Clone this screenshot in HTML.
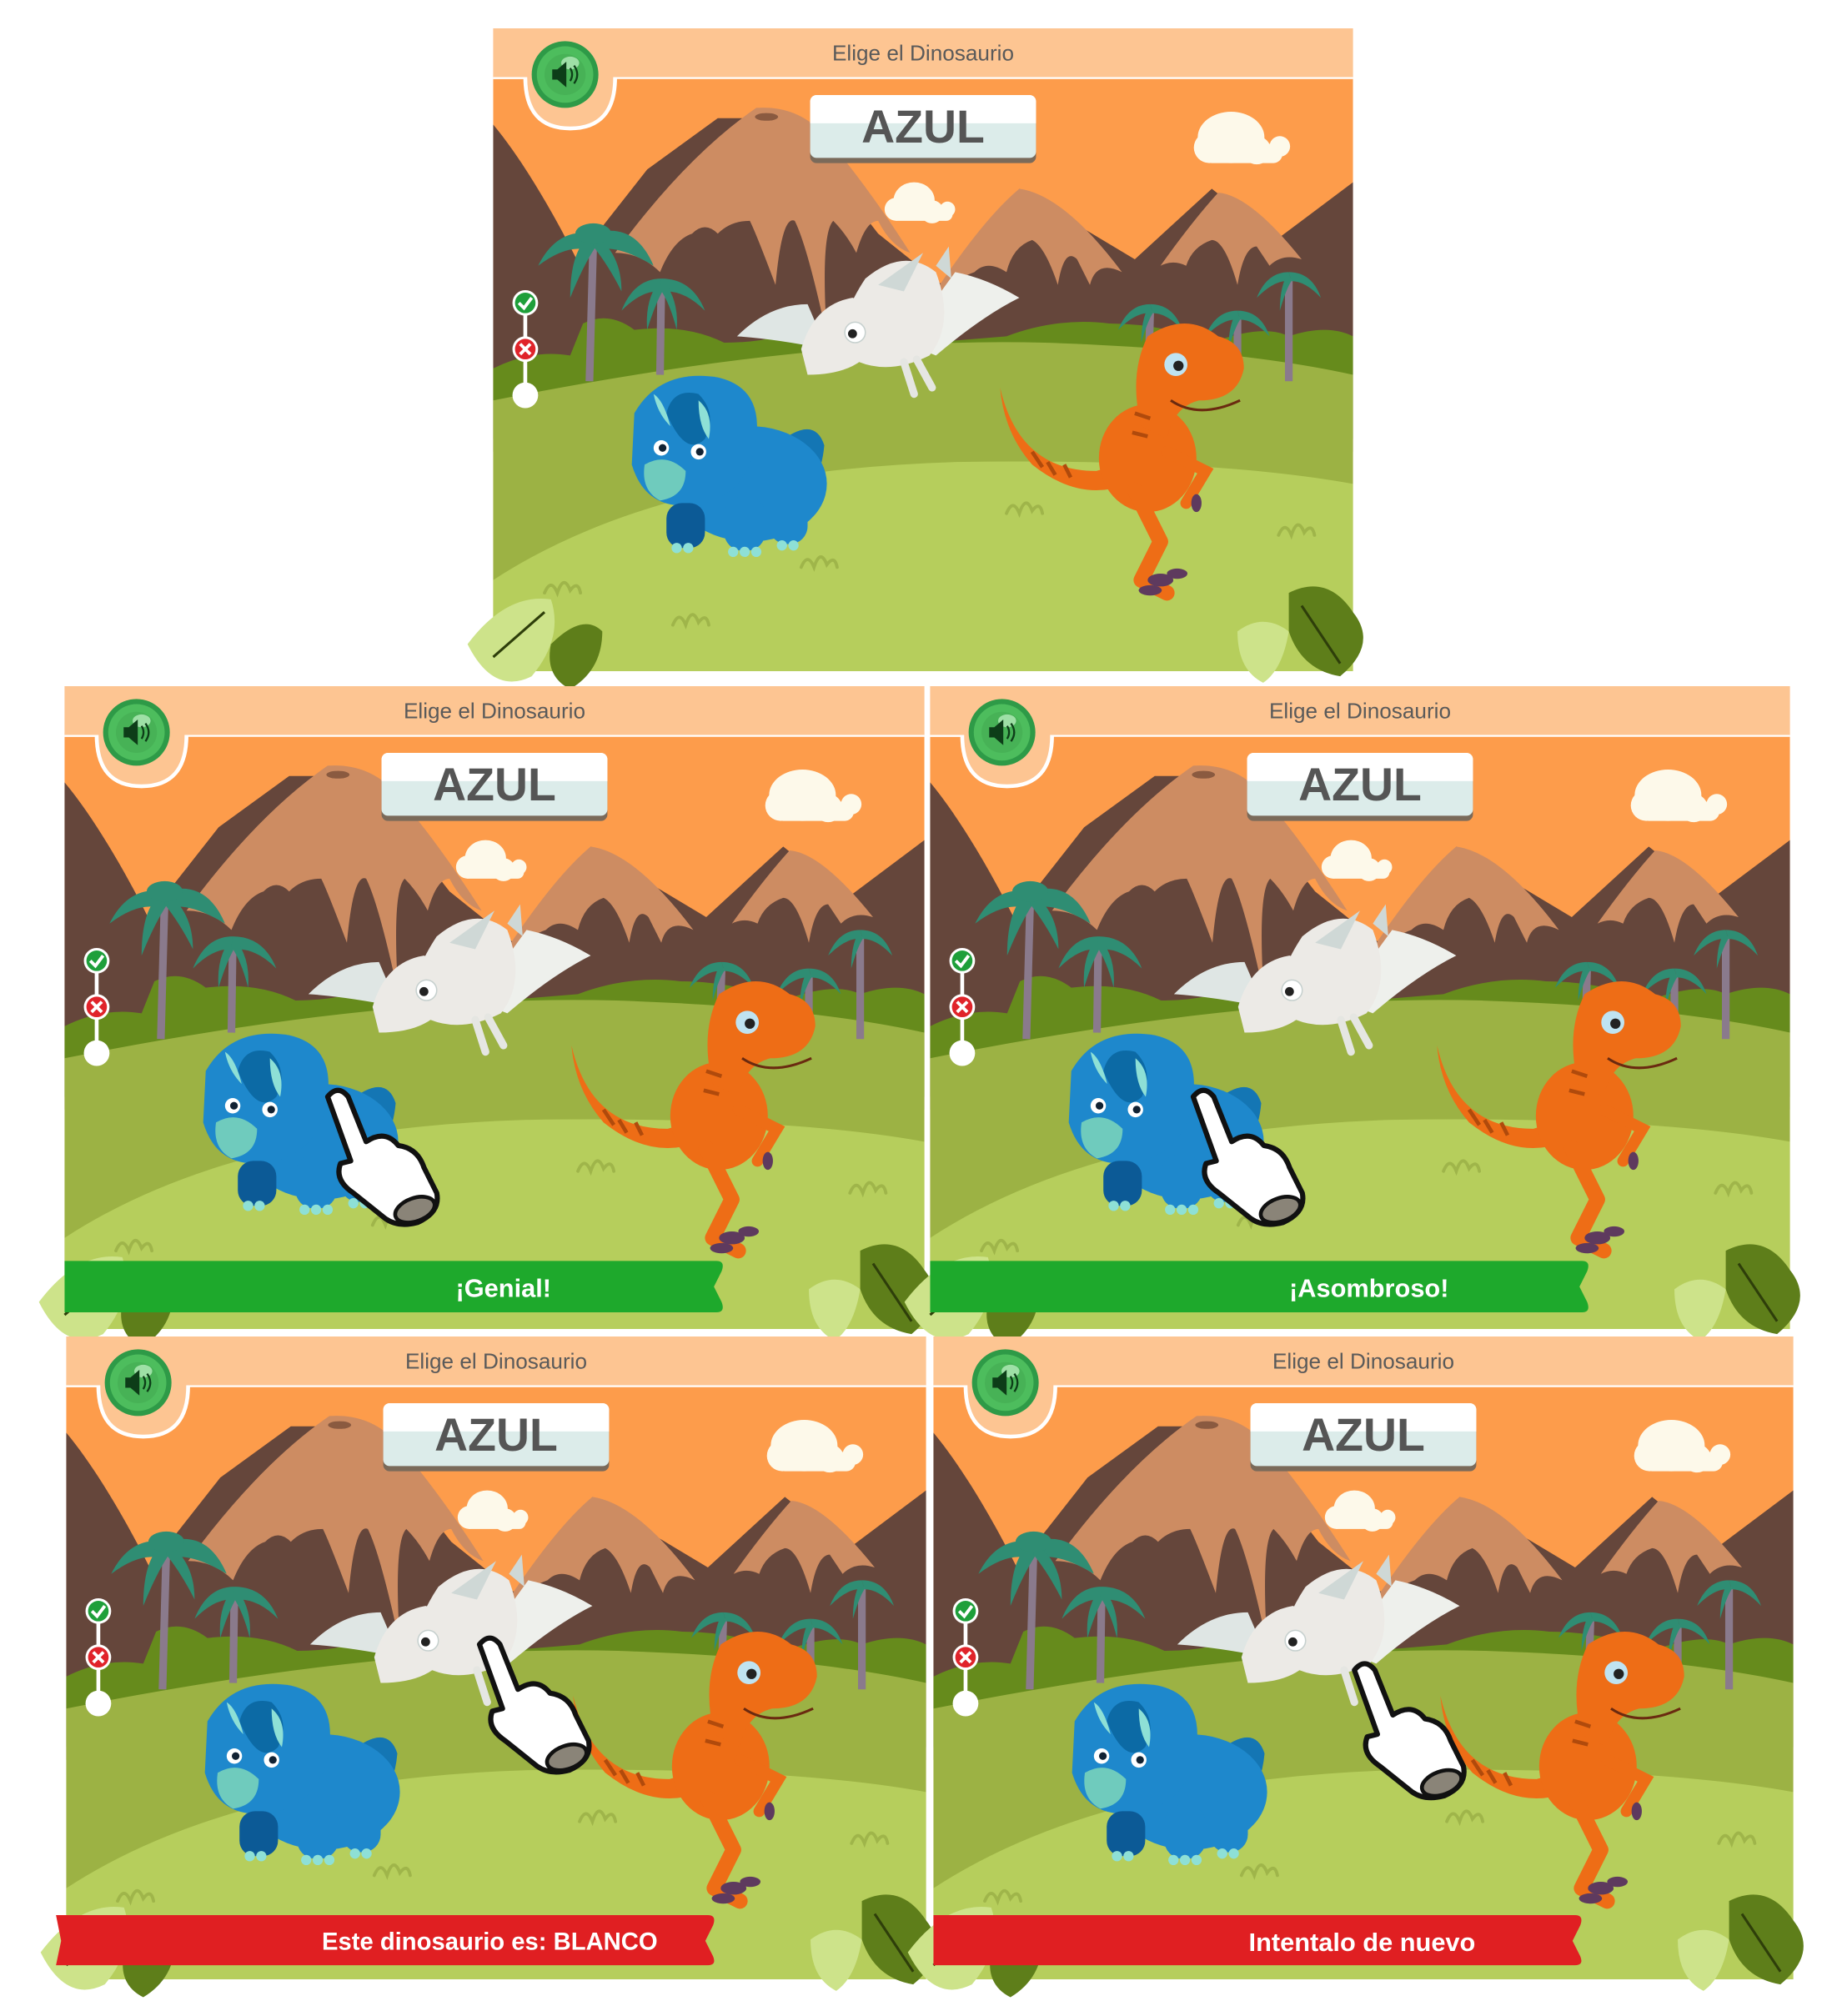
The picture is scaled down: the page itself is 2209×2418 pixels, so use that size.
<!DOCTYPE html>
<html><head><meta charset="utf-8">
<style>
html,body{margin:0;padding:0;background:#fff;width:2209px;height:2418px;overflow:hidden;position:relative;font-family:"Liberation Sans",sans-serif}
.p{position:absolute;width:1032px;height:771px}
.p svg{position:absolute;left:0;top:0;width:1032px;height:771px;overflow:visible}
</style></head><body>
<svg width="0" height="0" style="position:absolute">
<defs>
<symbol id="scene" viewBox="0 0 670 501" overflow="visible">
<rect x="0" y="0" width="670" height="501" fill="#fd9c4b"/>
<g fill="#fdf9ea">
<ellipse cx="575" cy="85" rx="26" ry="20"/><circle cx="558" cy="93" r="12"/><circle cx="595" cy="95" r="11"/><circle cx="613" cy="92" r="8"/><rect x="553" y="90" width="62" height="15" rx="7"/>
<ellipse cx="328" cy="134" rx="16" ry="14"/><circle cx="314" cy="141" r="9"/><circle cx="342" cy="143" r="9"/><circle cx="354" cy="141" r="6"/><rect x="310" y="140" width="48" height="10" rx="5"/>
</g>
<path d="M0,75 C25,105 50,150 65,180 L120,110 L175,70 L230,70 L300,160 L350,200 L410,125 L450,150 L500,180 L560,125 L610,165 L670,120 V330 H0Z" fill="#65463b"/>
<path d="M95,175 Q150,100 205,62 Q235,60 255,80 Q290,120 325,175 Q310,170 300,150 Q290,150 283,175 Q275,160 265,150 Q255,160 260,240 Q245,170 235,150 Q225,145 220,200 Q205,160 200,150 Q185,150 175,160 Q165,150 155,160 Q140,165 130,190 Q115,175 95,175Z" fill="#cd8c62"/>
<ellipse cx="213" cy="69" rx="9" ry="3" fill="#8a5a40"/>
<path d="M338,215 Q380,150 410,125 Q445,130 490,190 Q470,180 465,200 L455,180 Q445,170 440,200 Q430,170 420,165 Q405,170 400,190 Q385,180 375,190 Q360,195 338,215Z" fill="#cd8c62"/>
<path d="M520,185 Q545,150 565,128 Q590,130 630,180 Q615,175 605,185 L595,170 Q585,170 580,200 Q570,165 560,165 Q545,170 540,185 Q530,180 520,185Z" fill="#cd8c62"/>
<path d="M0,265 Q30,250 60,255 L70,230 Q90,220 110,235 Q150,230 180,245 Q220,245 250,230 Q300,225 340,245 L400,240 Q440,225 480,230 Q520,230 560,245 Q600,230 620,240 Q650,230 670,240 V320 H0Z" fill="#668b1c"/>
<path d="M0,290 Q250,240 430,245 Q580,250 670,270 V501 H0Z" fill="#9cb244"/>
<path d="M0,430 Q130,345 360,338 Q560,335 670,355 V501 H0Z" fill="#b6ce5c"/>
<g fill="none" stroke="#9fb54a" stroke-width="2.5" stroke-linecap="round">
<path d="M40,440 q5,-12 10,0 q5,-15 10,-2 q6,-8 8,2"/><path d="M140,465 q5,-12 10,0 q5,-15 10,-2 q6,-8 8,2"/>
<path d="M240,420 q5,-12 10,0 q5,-15 10,-2 q6,-8 8,2"/><path d="M400,378 q5,-12 10,0 q5,-15 10,-2 q6,-8 8,2"/>
<path d="M612,395 q5,-12 10,0 q5,-15 10,-2 q6,-8 8,2"/>
</g>
<g>
<g stroke="#8a7a8c" stroke-width="6" fill="none"><path d="M78,165 L75,275"/><path d="M131,200 L130,270"/><path d="M512,220 L511,255"/><path d="M580,225 L580,270"/><path d="M620,195 L620,275"/></g>
<g fill="#2f8d73">
<path d="M78,160 Q50,155 35,185 Q55,170 70,172Z"/><path d="M78,160 Q110,150 125,185 Q100,170 85,172Z"/><path d="M78,160 Q60,170 60,210 Q70,185 80,170Z"/><path d="M78,160 Q100,175 100,205 Q90,185 78,170Z"/><ellipse cx="78" cy="160" rx="14" ry="8"/>
<path d="M131,195 Q110,195 100,220 Q115,205 128,205Z"/><path d="M131,195 Q155,195 165,220 Q150,205 135,205Z"/><path d="M131,195 Q118,210 120,235 Q126,215 133,203Z"/><path d="M131,195 Q145,210 143,235 Q138,215 130,203Z"/>
<path d="M512,215 Q495,215 487,235 Q500,222 510,222Z"/><path d="M512,215 Q530,215 537,235 Q525,222 514,222Z"/><path d="M512,215 Q505,225 505,245 Q510,228 514,222Z"/>
<path d="M580,220 Q563,220 555,240 Q568,227 578,227Z"/><path d="M580,220 Q598,220 605,240 Q593,227 582,227Z"/><path d="M580,220 Q573,230 573,250 Q578,233 582,227Z"/>
<path d="M620,190 Q603,190 595,210 Q608,197 618,197Z"/><path d="M620,190 Q638,190 645,210 Q633,197 622,197Z"/><path d="M620,190 Q613,200 613,220 Q618,203 622,197Z"/>
</g>
</g>
<rect x="0" y="0" width="670" height="38" fill="#fdc592"/>
<path d="M0,38 H670" stroke="#fff" stroke-width="3"/>
<path d="M0,38 H25 Q25,78 60,78 Q95,78 95,38" fill="#fdc592" stroke="#fff" stroke-width="3"/>
<path d="M0,37 H670" stroke="#fdc592" stroke-width="2"/>
<circle cx="56" cy="36" r="26" fill="#2e9a47"/><circle cx="56" cy="36" r="22" fill="#4dbd5d"/><circle cx="56" cy="36" r="16" fill="#47b256"/>
<ellipse cx="60" cy="27" rx="7" ry="5" fill="#9ee0a6"/>
<path d="M46,32 h4 l7,-6 v20 l-7,-6 h-4z" fill="#0d3d18"/>
<path d="M60,31 q3,5 0,10 M63,29 q5,7 0,14" stroke="#0d3d18" stroke-width="1.5" fill="none"/>
<rect x="247" y="55" width="176" height="50" rx="5" fill="#7a6a5a"/>
<rect x="247" y="52" width="176" height="49" rx="5" fill="#dcecea"/>
<path d="M252,52 h166 a5,5 0 0 1 5,5 v17 h-176 v-17 a5,5 0 0 1 5,-5z" fill="#fff"/>
<path d="M25,214 V286" stroke="#fff" stroke-width="3"/>
<circle cx="25" cy="214" r="10" fill="#fff"/><circle cx="25" cy="214" r="8" fill="#1e9f3a"/>
<path d="M20,214 l4,4 l6,-8" stroke="#fff" stroke-width="2.5" fill="none"/>
<circle cx="25" cy="250" r="10" fill="#fff"/><circle cx="25" cy="250" r="8" fill="#e0232a"/>
<path d="M21,246 l8,8 M29,246 l-8,8" stroke="#fff" stroke-width="2.5"/>
<circle cx="25" cy="286" r="10" fill="#fff"/>
<g>
<path d="M220,325 Q250,300 258,325 Q255,360 230,370Z" fill="#1476b4"/>
<ellipse cx="200" cy="355" rx="60" ry="45" fill="#1e88cc"/>
<path d="M110,300 Q130,265 175,272 Q210,280 205,320 Q200,360 165,370 Q120,380 108,340Z" fill="#1e88cc"/>
<path d="M135,300 Q140,280 160,285 Q175,300 165,320 Q150,335 135,300Z" fill="#0c6aa5"/>
<path d="M125,285 Q128,300 138,310 Q133,290 125,285Z" fill="#8ee0d6"/>
<path d="M160,290 Q160,310 168,320 Q172,300 160,290Z" fill="#8ee0d6"/>
<circle cx="131" cy="327" r="6" fill="#fff"/><circle cx="132" cy="327" r="3" fill="#123"/>
<circle cx="160" cy="330" r="6" fill="#fff"/><circle cx="161" cy="330" r="3" fill="#123"/>
<path d="M118,340 Q135,330 150,345 Q150,365 130,368 Q115,360 118,340Z" fill="#6fcbbd"/>
<rect x="135" y="370" width="30" height="35" rx="12" fill="#0c5a96"/>
<rect x="180" y="365" width="32" height="42" rx="14" fill="#1e88cc"/>
<rect x="215" y="360" width="30" height="42" rx="14" fill="#1e88cc"/>
<g fill="#8ee0d6"><circle cx="143" cy="405" r="4"/><circle cx="152" cy="405" r="4"/><circle cx="187" cy="408" r="4"/><circle cx="196" cy="408" r="4"/><circle cx="205" cy="408" r="4"/><circle cx="225" cy="403" r="4"/><circle cx="234" cy="403" r="4"/></g>
</g>
<g>
<path d="M190,240 Q215,215 245,215 L260,250 Q220,242 190,240Z" fill="#dfe6e4"/>
<path d="M360,190 Q385,195 410,210 Q380,225 345,255 L320,245Z" fill="#eef0ec"/>
<path d="M345,185 L355,170 L357,195Z" fill="#cfd8d6"/>
<path d="M290,195 Q320,170 345,190 Q360,230 340,255 Q310,270 285,260 Q260,240 290,195Z" fill="#eceae6"/>
<path d="M240,250 Q250,215 280,210 Q300,215 300,240 Q290,270 245,270Z" fill="#eceae6"/>
<path d="M300,200 L335,175 L320,205Z" fill="#cfd8d6"/>
<circle cx="282" cy="237" r="8" fill="#fff" stroke="#c6d0ce"/><circle cx="280" cy="238" r="3.5" fill="#222"/>
<path d="M320,260 l8,25 M330,258 l12,22" stroke="#e5e6e2" stroke-width="6" stroke-linecap="round"/>
</g>
<g>
<path d="M395,280 Q410,345 470,345 Q490,340 505,320 L520,340 Q470,380 420,340 Q398,315 395,280Z" fill="#ee6d16"/>
<ellipse cx="510" cy="335" rx="38" ry="42" fill="#ee6d16"/>
<path d="M505,310 Q495,270 510,240 Q540,220 565,240 Q585,245 585,265 Q580,290 550,290 Q530,295 525,320Z" fill="#ee6d16"/>
<circle cx="532" cy="262" r="9" fill="#bfe3f1"/><circle cx="534" cy="263" r="4" fill="#222"/>
<path d="M528,290 Q550,305 582,290" stroke="#6a2a10" stroke-width="2" fill="none"/>
<path d="M500,360 L520,400 L505,430 L525,440" stroke="#ee6d16" stroke-width="12" fill="none" stroke-linecap="round" stroke-linejoin="round"/>
<path d="M525,330 L555,345 L540,370" stroke="#ee6d16" stroke-width="9" fill="none" stroke-linecap="round"/>
<g fill="#5e3a5e"><ellipse cx="520" cy="430" rx="10" ry="5"/><ellipse cx="512" cy="438" rx="9" ry="4"/><ellipse cx="533" cy="425" rx="8" ry="4"/><ellipse cx="548" cy="370" rx="4" ry="7"/></g>
<g stroke="#b04a0c" stroke-width="3"><path d="M420,330 l8,12 M432,338 l6,10 M445,340 l5,10 M500,300 l12,4 M498,315 l12,3"/></g>
</g>
<g>
<path d="M-20,480 Q10,440 45,445 Q55,475 30,505 Q0,520 -20,480Z" fill="#cde38a"/>
<path d="M45,480 Q70,455 85,470 Q85,500 60,515 Q40,505 45,480Z" fill="#5e7e1a"/>
<path d="M580,470 Q600,455 620,470 Q615,500 600,510 Q580,500 580,470Z" fill="#cde38a"/>
<path d="M620,440 Q650,425 670,455 Q690,480 660,505 Q630,500 620,470Z" fill="#5e7e1a"/>
<path d="M630,450 L660,495 M0,490 L40,455" stroke="#2e3e0a" stroke-width="2"/>
</g>
</symbol>
<symbol id="hand" viewBox="0 0 100 110" overflow="visible">
<path d="M10,10 Q18,0 26,10 L40,45 Q55,35 65,48 Q80,50 85,65 L95,85 Q98,100 80,108 Q65,112 55,105 L30,85 Q15,75 20,62 L28,60 Z" fill="#fff" stroke="#111" stroke-width="4" stroke-linejoin="round"/>
<ellipse cx="78" cy="98" rx="16" ry="9" transform="rotate(-20 78 98)" fill="#8a8478" stroke="#111" stroke-width="3"/>
</symbol>
</defs>
</svg>

<div class="p" style="left:591px;top:34px">
<svg viewBox="0 0 670 501"><use href="#scene"/>
<text x="335" y="25" text-anchor="middle" font-family="Liberation Sans" font-size="17" fill="#5a5a5a">Elige el Dinosaurio</text>
<text x="335" y="89" text-anchor="middle" font-family="Liberation Sans" font-weight="bold" font-size="36" fill="#555">AZUL</text>
</svg></div>

<div class="p" style="left:77px;top:823px">
<svg viewBox="0 0 670 501"><use href="#scene"/>
<text x="335" y="25" text-anchor="middle" font-family="Liberation Sans" font-size="17" fill="#5a5a5a">Elige el Dinosaurio</text>
<text x="335" y="89" text-anchor="middle" font-family="Liberation Sans" font-weight="bold" font-size="36" fill="#555">AZUL</text>
<use href="#hand" x="195" y="310" width="100" height="110"/>
<path d="M0,448 H508 Q515,448 512,456 L506,468 L512,480 Q515,488 508,488 H0Z" fill="#1ea92c"/>
<text x="342" y="476" text-anchor="middle" font-family="Liberation Sans" font-weight="bold" font-size="20" fill="#fff">¡Genial!</text>
</svg></div>

<div class="p" style="left:1115px;top:823px">
<svg viewBox="0 0 670 501"><use href="#scene"/>
<text x="335" y="25" text-anchor="middle" font-family="Liberation Sans" font-size="17" fill="#5a5a5a">Elige el Dinosaurio</text>
<text x="335" y="89" text-anchor="middle" font-family="Liberation Sans" font-weight="bold" font-size="36" fill="#555">AZUL</text>
<use href="#hand" x="195" y="310" width="100" height="110"/>
<path d="M0,448 H508 Q515,448 512,456 L506,468 L512,480 Q515,488 508,488 H0Z" fill="#1ea92c"/>
<text x="342" y="476" text-anchor="middle" font-family="Liberation Sans" font-weight="bold" font-size="20" fill="#fff">¡Asombroso!</text>
</svg></div>

<div class="p" style="left:79px;top:1603px">
<svg viewBox="0 0 670 501"><use href="#scene"/>
<text x="335" y="25" text-anchor="middle" font-family="Liberation Sans" font-size="17" fill="#5a5a5a">Elige el Dinosaurio</text>
<text x="335" y="89" text-anchor="middle" font-family="Liberation Sans" font-weight="bold" font-size="36" fill="#555">AZUL</text>
<use href="#hand" x="312" y="230" width="100" height="110"/>
<path d="M-8,451 H500 Q507,451 504,459 L498,471 L504,483 Q507,490 500,490 H-8 L-4,471Z" fill="#e01f22"/>
<text x="330" y="478" text-anchor="middle" font-family="Liberation Sans" font-weight="bold" font-size="19" fill="#fff">Este dinosaurio es: BLANCO</text>
</svg></div>

<div class="p" style="left:1119px;top:1603px">
<svg viewBox="0 0 670 501"><use href="#scene"/>
<text x="335" y="25" text-anchor="middle" font-family="Liberation Sans" font-size="17" fill="#5a5a5a">Elige el Dinosaurio</text>
<text x="335" y="89" text-anchor="middle" font-family="Liberation Sans" font-weight="bold" font-size="36" fill="#555">AZUL</text>
<use href="#hand" x="318" y="250" width="100" height="110"/>
<path d="M0,451 H500 Q507,451 504,459 L498,471 L504,483 Q507,490 500,490 H0Z" fill="#e01f22"/>
<text x="334" y="479" text-anchor="middle" font-family="Liberation Sans" font-weight="bold" font-size="20" fill="#fff">Intentalo de nuevo</text>
</svg></div>
</body></html>
